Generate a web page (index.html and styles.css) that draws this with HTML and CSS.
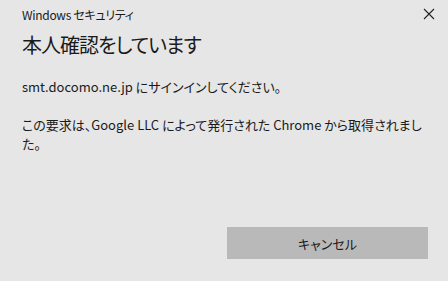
FILE: index.html
```html
<!DOCTYPE html>
<html lang="ja">
<head>
<meta charset="utf-8">
<link rel="stylesheet" href="styles.css">
</head>
<body>
<div class="dialog">
  <div class="titlebar">
    <span class="app">Windows セキュリティ</span>
    <svg class="close" width="12" height="12" viewBox="0 0 12 12"><path d="M1 1L11 11M11 1L1 11" stroke="#222" stroke-width="1.1" fill="none"/></svg>
  </div>
  <h1 class="heading">本人確認をしています</h1>
  <p class="msg">smt.docomo.ne.jp にサインインしてください。</p>
  <p class="msg">この要求は、Google LLC によって発行された Chrome から取得されました。</p>
  <div class="actions">
    <button class="cancel">キャンセル</button>
  </div>
</div>
</body>
</html>
```
FILE: styles.css
```css
html, body {
  margin: 0;
  padding: 0;
  background: #e6e6e6;
}
.dialog {
  width: 448px;
  height: 281px;
  box-sizing: border-box;
  padding: 0 20px 0 22px;
  font-family: "Noto Sans CJK JP", "Noto Sans", sans-serif;
  font-feature-settings: "palt";
  color: #1a1a1a;
  display: flex;
  flex-direction: column;
}
.titlebar {
  display: flex;
  justify-content: space-between;
  align-items: center;
  height: 28px;
}
.app {
  font-size: 12px;
  letter-spacing: -0.3px;
}
.close {
  margin-right: -7px;
}
.heading {
  margin: 4px 0 0;
  font-size: 20px;
  font-weight: normal;
  line-height: 26px;
  letter-spacing: -1px;
}
.msg {
  margin: 19px 0 0;
  font-size: 13px;
  line-height: 19px;
}
.actions {
  margin-top: auto;
  margin-bottom: 22px;
  display: flex;
  justify-content: flex-end;
}
.cancel {
  width: 201px;
  height: 32px;
  border: none;
  background: #b9b9b9;
  font-family: inherit;
  font-feature-settings: "palt";
  font-size: 13px;
  color: #1a1a1a;
  padding: 0;
}
```
